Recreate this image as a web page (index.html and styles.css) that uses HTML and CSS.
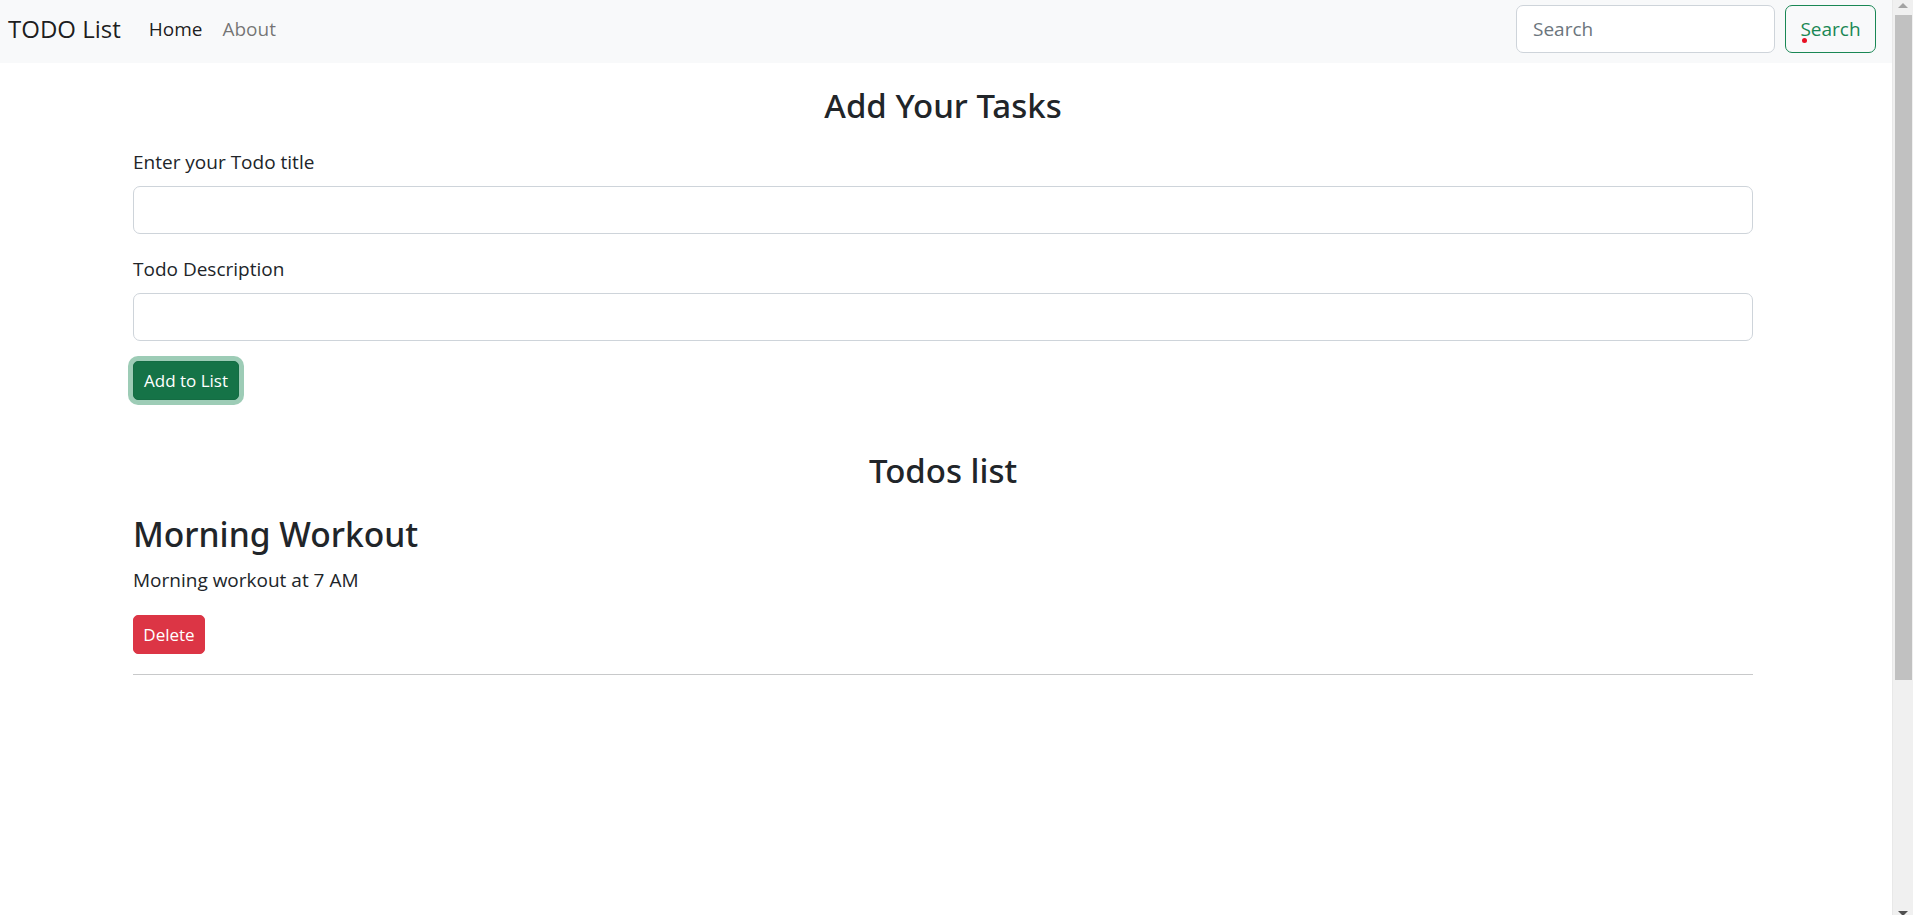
FILE: index.html
```html
<!DOCTYPE html>
<html lang="en">
<head>
<meta charset="utf-8">
<title>TODO List</title>
<link rel="stylesheet" href="styles.css">
</head>
<body>
<div class="page">
  <nav class="navbar">
    <a class="brand" href="#">TODO List</a>
    <ul class="nav-links">
      <li><a class="nav-link active" href="#">Home</a></li>
      <li><a class="nav-link" href="#">About</a></li>
    </ul>
    <form class="search">
      <input class="search-input" type="search" placeholder="Search">
      <button class="btn-outline" type="button">Search<span class="cursor-dot"></span></button>
    </form>
  </nav>
  <main class="container">
    <h2 class="title">Add Your Tasks</h2>
    <form class="todo-form">
      <div class="field">
        <label class="label">Enter your Todo title</label>
        <input class="form-control" type="text">
      </div>
      <div class="field">
        <label class="label">Todo Description</label>
        <input class="form-control" type="text">
      </div>
      <button class="btn-success" type="button">Add to List</button>
    </form>
    <h2 class="title list-title">Todos list</h2>
    <div class="todo">
      <h2 class="todo-title">Morning Workout</h2>
      <p class="todo-desc">Morning workout at 7 AM</p>
      <button class="btn-danger" type="button">Delete</button>
      <hr class="divider">
    </div>
  </main>
</div>
<div class="scrollbar">
  <div class="arrow-up"></div>
  <div class="thumb"></div>
  <div class="track-fill"></div>
  <div class="arrow-down"></div>
</div>
</body>
</html>
```
FILE: styles.css
```css
* { box-sizing: border-box; }
html, body { margin: 0; padding: 0; }
body {
  display: flex;
  height: 915px;
  overflow: hidden;
  font-family: "Open Sans", "Noto Sans", sans-serif;
  font-size: 19px;
  line-height: 30px;
  color: #212529;
  background: #fff;
}
.page { flex: 1; min-width: 0; }

.navbar {
  height: 63px;
  background: #f8f9fa;
  display: flex;
  align-items: center;
  padding: 5px 16px 10px 8px;
}
.brand {
  font-size: 24px;
  color: rgba(0,0,0,.9);
  text-decoration: none;
  margin-right: 18px;
}
.nav-links { list-style: none; display: flex; margin: 0; padding: 0; flex: 1; }
.nav-link {
  display: block;
  padding: 0 10px;
  color: rgba(0,0,0,.55);
  text-decoration: none;
}
.nav-link.active { color: rgba(0,0,0,.9); }
.search { display: flex; gap: 10px; }
.search-input {
  width: 259px;
  height: 48px;
  border: 1px solid #ced4da;
  border-radius: 7px;
  padding: 0 16px;
  font: inherit;
  color: #212529;
  background: #fff;
}
.search-input::placeholder { color: #6c757d; }
.btn-outline {
  position: relative;
  width: 91px;
  height: 48px;
  border: 1px solid #198754;
  border-radius: 7px;
  background: transparent;
  color: #198754;
  font: inherit;
  padding: 0;
}
.cursor-dot {
  position: absolute;
  left: 16px;
  top: 32px;
  width: 5px;
  height: 5px;
  border-radius: 50%;
  background: #e81123;
}

.container { width: 1620px; margin-left: 133px; padding-top: 22px; }
.title {
  margin: 0;
  font-family: "Noto Sans", "Open Sans", sans-serif;
  font-size: 33px;
  line-height: 42px;
  font-weight: 500;
  text-align: center;
}
.todo-form { margin-top: 20px; }
.field { margin-bottom: 20px; }
.label { display: block; margin-bottom: 9px; }
.form-control {
  display: block;
  width: 100%;
  height: 48px;
  border: 1px solid #ced4da;
  border-radius: 7px;
  font: inherit;
  padding: 0 15px;
}
.btn-success {
  display: block;
  height: 39px;
  width: 106px;
  padding: 0;
  border: 1px solid #146c43;
  border-radius: 5px;
  background: #157347;
  color: #fff;
  font: inherit;
  font-size: 17px;
  box-shadow: 0 0 0 5px rgba(60,153,110,.5);
}
.list-title { margin-top: 50px; }
.todo-title {
  margin: 21px 0 10px;
  font-family: "Noto Sans", "Open Sans", sans-serif;
  font-size: 33.6px;
  line-height: 42px;
  font-weight: 500;
}
.todo-desc { margin: 0 0 20px; }
.btn-danger {
  display: block;
  height: 39px;
  width: 72px;
  padding: 0;
  border: 1px solid #dc3545;
  border-radius: 5px;
  background: #dc3545;
  color: #fff;
  font: inherit;
  font-size: 17px;
}
.divider {
  margin: 20px 0 0;
  border: 0;
  border-top: 1px solid #c8c9ca;
}

.scrollbar {
  width: 21px;
  flex: none;
  background: #f0f0f0;
  border-left: 1px solid #e8e8e8;
  display: flex;
  flex-direction: column;
  align-items: center;
  padding-top: 3px;
}
.arrow-up {
  width: 0; height: 0;
  border-left: 5px solid transparent;
  border-right: 5px solid transparent;
  border-bottom: 5px solid #a3a3a3;
}
.thumb {
  margin-top: 7px;
  width: 17px;
  height: 665px;
  background: #c1c1c1;
}
.track-fill { flex: 1; }
.arrow-down {
  width: 0; height: 0;
  border-left: 5px solid transparent;
  border-right: 5px solid transparent;
  border-top: 5px solid #505050;
  margin-bottom: -1px;
}
```
